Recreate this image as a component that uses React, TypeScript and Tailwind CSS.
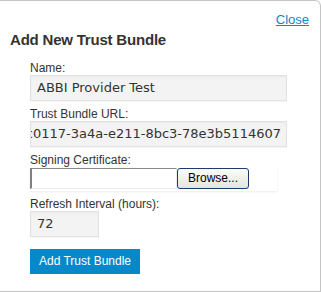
import React from "react";

const labelCls =
  "h-[13px] leading-[13px] text-[12px] text-[#333] font-['Liberation_Sans',Arial,sans-serif] whitespace-nowrap";
const inputCls =
  "h-[26px] border border-[#e2e2e2] bg-[#f3f3f3] shadow-[inset_0_1px_2px_rgba(0,0,0,0.04),0_1px_1px_rgba(0,0,0,0.04)] flex items-center text-[13px] text-[#333] font-['DejaVu_Sans',Verdana,sans-serif] whitespace-nowrap overflow-hidden";

export default function App() {
  return (
    <div className="w-[321px] h-[292px] bg-white border-t border-r border-b border-[#c4c4c4] rounded-tr-[6px] pt-[11px] box-border">
      <div className="flex justify-end pr-[11px]">
        <a
          href="#"
          className="h-[15px] leading-[15px] text-[13px] text-[#0a88cc] underline font-['Liberation_Sans',Arial,sans-serif]"
        >
          Close
        </a>
      </div>
      <h2 className="mt-[4px] pl-[10px] h-[18px] leading-[18px] text-[15px] font-bold tracking-[-0.2px] text-[#333] font-['Liberation_Sans',Arial,sans-serif]">
        Add New Trust Bundle
      </h2>
      <div className="mt-[13px] pl-[30px] flex flex-col">
        <div className={labelCls}>Name:</div>
        <div className={inputCls + " w-[257px] pl-[6px]"}>ABBI Provider Test</div>

        <div className={labelCls + " mt-[7px]"}>Trust Bundle URL:</div>
        <div className={inputCls + " w-[257px] justify-end pr-[5px]"}>
          <span>ab3c0117-3a4a-e211-8bc3-78e3b5114607</span>
        </div>

        <div className={labelCls + " mt-[7px]"}>Signing Certificate:</div>
        <div className="w-[247px] h-[24px] bg-white shadow-[0_1px_2px_rgba(0,0,0,0.08)] flex items-start pt-[1px]">
          <div className="w-[147px] h-[21px] border-t border-l-2 border-t-[#8a8a8a] border-l-[#808080] border-b border-r border-b-[#ececec] border-r-[#ececec] bg-white box-border" />
          <button className="w-[72px] h-[21px] rounded-[3px] border border-[#1c3d6b] bg-gradient-to-b from-[#fbfbf8] to-[#e6e6de] text-[12px] text-black font-['Liberation_Sans',Arial,sans-serif] leading-[19px] box-border">
            Browse...
          </button>
        </div>

        <div className={labelCls + " mt-[7px]"}>Refresh Interval (hours):</div>
        <div className={inputCls + " w-[69px] pl-[6px]"}>72</div>

        <div className="mt-[10px]">
          <button className="w-[110px] h-[25px] bg-[#0788c9] text-white text-[12px] font-['Liberation_Sans',Arial,sans-serif] leading-[25px] text-center">
            Add Trust Bundle
          </button>
        </div>
      </div>
    </div>
  );
}
